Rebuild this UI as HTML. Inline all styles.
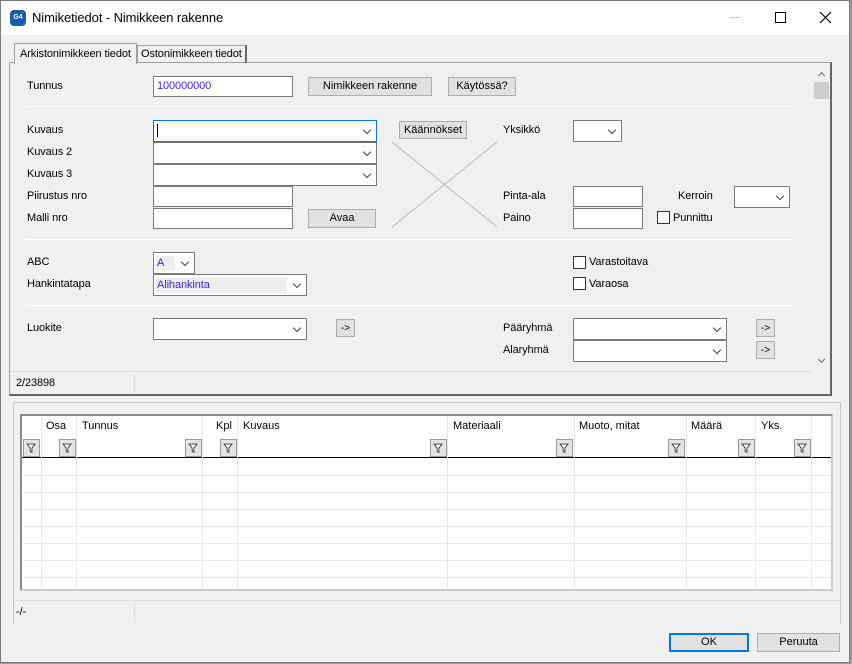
<!DOCTYPE html>
<html><head><meta charset="utf-8"><style>
*{box-sizing:border-box;margin:0;padding:0}
body{width:852px;height:664px;background:#9a9a9a;font-family:"Liberation Sans",sans-serif;font-size:11px;color:#000;position:relative;overflow:hidden}
.a{position:absolute}
.win{left:0;top:0;width:850px;height:663px;background:#f0f0f0;border:1px solid #7a7a7a}
.title{left:1px;top:1px;width:848px;height:34px;background:#fff}
.l{position:absolute;font-size:11px;white-space:nowrap;letter-spacing:-0.1px}
.i{position:absolute;background:#fff;border:1px solid #7a7a7a;height:21px}
.c{position:absolute;background:#fff;border:1px solid #7a7a7a;height:22px}
.c:after{content:"";position:absolute;right:6px;top:6px;width:5px;height:5px;border-right:1px solid #444;border-bottom:1px solid #444;transform:rotate(45deg)}
.b{position:absolute;background:#e1e1e1;border:1px solid #adadad;height:19px;text-align:center;line-height:17px;font-size:11px}
.hr{position:absolute;height:1px;background:#a0a0a0;border-bottom:1px solid #fff;left:27px;width:767px}
.cb{position:absolute;width:13px;height:13px;border:1px solid #333;background:#fff}
.f{position:absolute;top:439px;width:17px;height:18px;background:#e4e4e4;border:1px solid #999}
.vl{position:absolute;top:457px;width:1px;height:131px;background:#e8e8e8}
.hl{position:absolute;left:23px;width:808px;height:1px;background:#e8e8e8}
.hd{position:absolute;top:420px;font-size:11px}
</style></head><body>
<svg width="0" height="0" style="position:absolute"><defs><symbol id="fn" viewBox="0 0 17 18"><path d="M3.5 4.5h9l-3.5 4.5v5l-2 -1v-4z" fill="#fff" stroke="#333" stroke-width="1"/></symbol></defs></svg>
<div class="a win"></div>
<div class="a title"></div>
<div class="a" style="left:10px;top:10px;width:16px;height:16px;border-radius:4px;background:#1a5ca8;color:#fff;font-size:7px;font-weight:bold;text-align:center;line-height:16px">G4</div>
<div class="l" style="left:32px;top:10px;font-size:13px">Nimiketiedot - Nimikkeen rakenne</div>
<div class="a" style="left:730px;top:17px;width:11px;height:1px;background:#ccc"></div>
<div class="a" style="left:775px;top:12px;width:11px;height:11px;border:1px solid #000"></div>
<svg class="a" style="left:819px;top:11px" width="13" height="13"><path d="M1 1L12 12M12 1L1 12" stroke="#000" stroke-width="1.2"/></svg>

<div class="a" style="left:9px;top:62px;width:823px;height:334px;border:1px solid #a0a0a0;border-right:2px solid #666;border-bottom:2px solid #666;background:#f0f0f0"></div>
<div class="a" style="left:14px;top:43px;width:123px;height:21px;background:#f0f0f0;border:1px solid #a0a0a0;border-bottom:none"></div>
<div class="l" style="left:20px;top:48px">Arkistonimikkeen tiedot</div>
<div class="a" style="left:137px;top:45px;width:110px;height:18px;border:1px solid #a0a0a0;border-right:2px solid #666;border-bottom:none"></div>
<div class="l" style="left:141px;top:48px">Ostonimikkeen tiedot</div>

<div class="a" style="left:813px;top:66px;width:17px;height:305px;background:#f0f0f0"></div>
<div class="a" style="left:819px;top:73px;width:5px;height:5px;border-left:1.5px solid #666;border-top:1.5px solid #666;transform:rotate(45deg)"></div>
<div class="a" style="left:814px;top:82px;width:15px;height:17px;background:#cdcdcd"></div>
<div class="a" style="left:819px;top:357px;width:5px;height:5px;border-right:1.5px solid #666;border-bottom:1.5px solid #666;transform:rotate(45deg)"></div>

<div class="l" style="left:27px;top:80px">Tunnus</div>
<div class="i" style="left:153px;top:76px;width:140px;height:21px"></div>
<div class="l" style="left:157px;top:80px;color:#3b1fe0">100000000</div>
<div class="b" style="left:308px;top:77px;width:124px">Nimikkeen rakenne</div>
<div class="b" style="left:448px;top:77px;width:68px">Käytössä?</div>
<div class="hr" style="top:106px"></div>

<div class="l" style="left:27px;top:124px">Kuvaus</div>
<div class="l" style="left:27px;top:146px">Kuvaus 2</div>
<div class="l" style="left:27px;top:168px">Kuvaus 3</div>
<div class="l" style="left:27px;top:190px">Piirustus nro</div>
<div class="l" style="left:27px;top:212px">Malli nro</div>
<div class="c" style="left:153px;top:120px;width:224px;border-color:#0078d7"></div>
<div class="a" style="left:157px;top:124px;width:1px;height:13px;background:#000"></div>
<div class="c" style="left:153px;top:142px;width:224px"></div>
<div class="c" style="left:153px;top:164px;width:224px"></div>
<div class="i" style="left:153px;top:186px;width:140px"></div>
<div class="i" style="left:153px;top:208px;width:140px"></div>
<div class="b" style="left:308px;top:209px;width:68px">Avaa</div>
<div class="b" style="left:399px;top:121px;width:68px;height:18px;line-height:16px">Käännökset</div>
<svg class="a" style="left:390px;top:140px" width="110" height="90"><line x1="2" y1="2" x2="107" y2="87" stroke="#bbb"/><line x1="107" y1="2" x2="2" y2="87" stroke="#bbb"/></svg>

<div class="l" style="left:503px;top:124px">Yksikkö</div>
<div class="c" style="left:573px;top:120px;width:49px"></div>
<div class="l" style="left:503px;top:190px">Pinta-ala</div>
<div class="i" style="left:573px;top:186px;width:70px"></div>
<div class="l" style="left:503px;top:212px">Paino</div>
<div class="i" style="left:573px;top:208px;width:70px"></div>
<div class="l" style="left:678px;top:190px">Kerroin</div>
<div class="c" style="left:734px;top:186px;width:56px"></div>
<div class="cb" style="left:657px;top:211px"></div>
<div class="l" style="left:673px;top:212px">Punnittu</div>
<div class="hr" style="top:239px"></div>

<div class="l" style="left:27px;top:256px">ABC</div>
<div class="c" style="left:153px;top:252px;width:42px"></div>
<div class="a" style="left:156px;top:256px;width:19px;height:14px;background:#eee"></div>
<div class="l" style="left:157px;top:257px;color:#3b1fe0">A</div>
<div class="l" style="left:27px;top:278px">Hankintatapa</div>
<div class="c" style="left:153px;top:274px;width:154px"></div>
<div class="a" style="left:156px;top:278px;width:131px;height:15px;background:#eee"></div>
<div class="l" style="left:157px;top:279px;color:#3b1fe0">Alihankinta</div>
<div class="cb" style="left:573px;top:256px"></div>
<div class="l" style="left:589px;top:256px">Varastoitava</div>
<div class="cb" style="left:573px;top:277px"></div>
<div class="l" style="left:589px;top:278px">Varaosa</div>
<div class="hr" style="top:305px"></div>

<div class="l" style="left:27px;top:322px">Luokite</div>
<div class="c" style="left:153px;top:318px;width:154px"></div>
<div class="b" style="left:336px;top:319px;width:19px;height:18px;font-size:10px">-&gt;</div>
<div class="l" style="left:503px;top:322px">Pääryhmä</div>
<div class="c" style="left:573px;top:318px;width:154px"></div>
<div class="b" style="left:756px;top:319px;width:19px;height:18px;font-size:10px">-&gt;</div>
<div class="l" style="left:503px;top:344px">Alaryhmä</div>
<div class="c" style="left:573px;top:340px;width:154px"></div>
<div class="b" style="left:756px;top:341px;width:19px;height:18px;font-size:10px">-&gt;</div>

<div class="a" style="left:10px;top:371px;width:803px;height:1px;background:#ddd"></div>
<div class="a" style="left:134px;top:374px;width:1px;height:19px;background:#ddd"></div>
<div class="l" style="left:16px;top:377px">2/23898</div>

<div class="a" style="left:13px;top:402px;width:828px;height:222px;border:1px solid #c8c8c8;border-bottom:none"></div>
<div class="a" style="left:20px;top:414px;width:813px;height:177px;background:#fff;border:2px solid #8a8a8a;border-right-color:#ccc;border-bottom-color:#ccc"></div>
<div class="a" style="left:22px;top:457px;width:809px;height:1px;background:#000"></div>
<div class="hl" style="top:475px"></div><div class="hl" style="top:492px"></div><div class="hl" style="top:509px"></div><div class="hl" style="top:526px"></div><div class="hl" style="top:543px"></div><div class="hl" style="top:560px"></div><div class="hl" style="top:577px"></div>
<div class="vl" style="left:41px"></div><div class="vl" style="left:76px"></div><div class="vl" style="left:202px"></div><div class="vl" style="left:237px"></div><div class="vl" style="left:447px"></div><div class="vl" style="left:574px"></div><div class="vl" style="left:686px"></div><div class="vl" style="left:755px"></div><div class="vl" style="left:811px"></div>
<div class="a" style="left:41px;top:416px;width:1px;height:41px;background:#e8e8e8"></div>
<div class="a" style="left:76px;top:416px;width:1px;height:41px;background:#e8e8e8"></div>
<div class="a" style="left:202px;top:416px;width:1px;height:41px;background:#e8e8e8"></div>
<div class="a" style="left:237px;top:416px;width:1px;height:41px;background:#e8e8e8"></div>
<div class="a" style="left:447px;top:416px;width:1px;height:41px;background:#e8e8e8"></div>
<div class="a" style="left:574px;top:416px;width:1px;height:41px;background:#e8e8e8"></div>
<div class="a" style="left:686px;top:416px;width:1px;height:41px;background:#e8e8e8"></div>
<div class="a" style="left:755px;top:416px;width:1px;height:41px;background:#e8e8e8"></div>
<div class="a" style="left:811px;top:416px;width:1px;height:41px;background:#e8e8e8"></div>
<div class="hd" style="left:46px">Osa</div>
<div class="hd" style="left:82px">Tunnus</div>
<div class="hd" style="left:216px">Kpl</div>
<div class="hd" style="left:243px">Kuvaus</div>
<div class="hd" style="left:453px">Materiaali</div>
<div class="hd" style="left:579px">Muoto, mitat</div>
<div class="hd" style="left:691px">Määrä</div>
<div class="hd" style="left:761px">Yks.</div>
<svg class="f" style="left:23px"><use href="#fn"/></svg><svg class="f" style="left:59px"><use href="#fn"/></svg><svg class="f" style="left:185px"><use href="#fn"/></svg><svg class="f" style="left:220px"><use href="#fn"/></svg><svg class="f" style="left:430px"><use href="#fn"/></svg><svg class="f" style="left:556px"><use href="#fn"/></svg><svg class="f" style="left:668px"><use href="#fn"/></svg><svg class="f" style="left:738px"><use href="#fn"/></svg><svg class="f" style="left:794px"><use href="#fn"/></svg>

<div class="a" style="left:14px;top:600px;width:826px;height:1px;background:#ddd"></div>
<div class="a" style="left:134px;top:602px;width:1px;height:21px;background:#ddd"></div>
<div class="l" style="left:16px;top:606px">-/-</div>

<div class="b" style="left:669px;top:633px;width:80px;height:19px;border:2px solid #0078d7;line-height:15px">OK</div>
<div class="b" style="left:757px;top:633px;width:83px;height:19px">Peruuta</div>
</body></html>
